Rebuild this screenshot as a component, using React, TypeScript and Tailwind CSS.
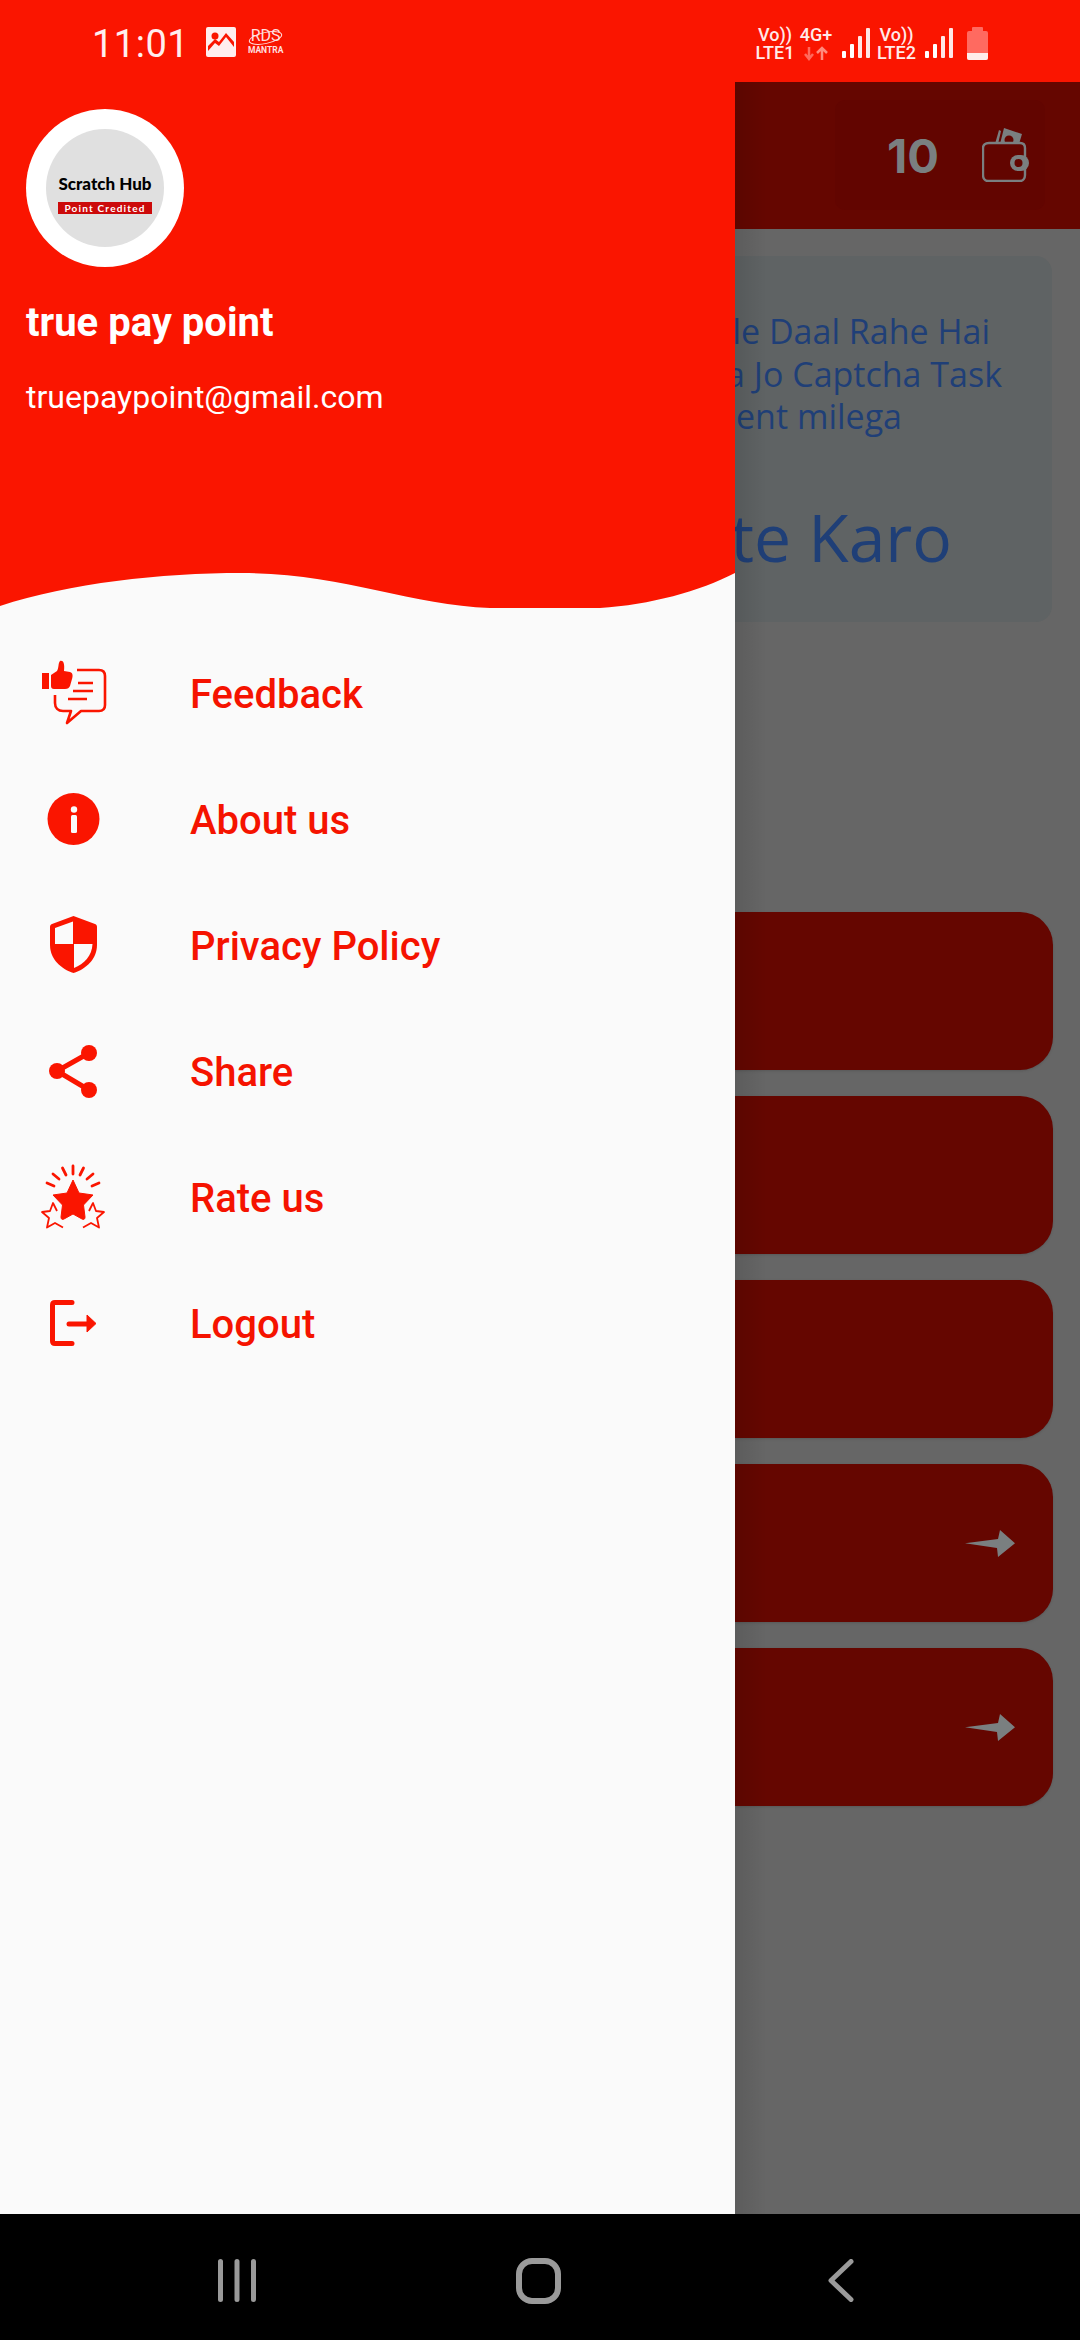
const red = "#fa1500";

function StatusLeft() {
  return (
    <div className="flex items-center pl-[92px] pt-[6px]">
      <span className="text-[38px] leading-none text-[#ffeeee] font-normal tracking-[0.5px]">11:01</span>
      <svg width="30" height="30" viewBox="0 0 30 30" className="ml-[17px] -mt-[5px]">
        <rect width="30" height="30" rx="2" fill="#ffeeee" />
        <circle cx="9" cy="9" r="3.5" fill={red} />
        <path d="M2 24 L9 16 L13 19 L20 10 L28 20 V15 L20 6 L13 15 L9 12 L2 19 Z" fill={red} />
      </svg>
      <div className="relative ml-[12px] -mt-[6px] flex h-[26px] w-[35px] flex-col items-center text-[#ffdfdf]">
        <svg width="35" height="20" viewBox="0 0 35 20" className="absolute left-0 top-0">
          <ellipse cx="17.500" cy="10" rx="16.500" ry="5.500" fill="none" stroke="#ffdfdf" strokeWidth="1" transform="rotate(-12 17.500 10)" />
        </svg>
        <span className="text-[16px] leading-[16px] font-normal">RDS</span>
        <span className="mt-[2px] text-[8.500px] leading-[8px] font-bold">MANTRA</span>
      </div>
    </div>
  );
}

function Signal() {
  return (
    <svg width="28" height="31" viewBox="0 0 28 31">
      <rect x="0" y="23" width="4" height="7" rx="1" fill="#fff" />
      <rect x="8" y="16" width="4" height="14" rx="1" fill="#fff" />
      <rect x="16" y="8" width="4" height="22" rx="1" fill="#ffe6e6" />
      <rect x="24" y="0" width="4" height="30" rx="1" fill="#ffe6e6" />
    </svg>
  );
}

function StatusRight() {
  return (
    <div className="flex items-center pr-[92px] pt-[5px] text-[#ffeaea] font-medium">
      <div className="flex w-[42px] flex-col items-center text-[18px] leading-[18px]">
        <span>Vo))</span>
        <span>LTE1</span>
      </div>
      <div className="ml-[3px] flex w-[34px] flex-col items-center">
        <span className="text-[18px] leading-[18px]">4G+</span>
        <svg width="24" height="15" viewBox="0 0 24 15" className="mt-[2px]">
          <path d="M5 1 V13 M1 8 L5 13 L9 8" stroke="#ff6a5c" strokeWidth="2.500" fill="none" />
          <path d="M18 14 V2 M13 7 L18 2 L23 7" stroke="#ff8a7c" strokeWidth="2.500" fill="none" />
        </svg>
      </div>
      <div className="ml-[9px]"><Signal /></div>
      <div className="ml-[6px] flex w-[41px] flex-col items-center text-[18px] leading-[18px]">
        <span>Vo))</span>
        <span>LTE2</span>
      </div>
      <div className="ml-[8px]"><Signal /></div>
      <svg width="21" height="33" viewBox="0 0 21 33" className="ml-[14px]">
        <rect x="5" y="0" width="11" height="5" rx="1" fill="#ff6a60" />
        <rect x="0" y="4" width="21" height="29" rx="2" fill="#ff6a60" />
        <path d="M0 26 H21 V31 A2 2 0 0 1 19 33 H2 A2 2 0 0 1 0 31 Z" fill="#ffecea" />
      </svg>
    </div>
  );
}

function FeedbackIcon() {
  return (
    <svg width="72" height="72" viewBox="0 0 72 72">
      <rect x="5" y="14" width="7" height="16" fill={red} />
      <path d="M14 16 L20 12 C22 9 21 4 23 2 C26 1 28 4 27 12 L33 13 C36 14 36 17 35 20 L33 27 C32 29 31 30 28 30 L17 30 C15 30 14 29 14 27 Z" fill={red} />
      <path d="M40 11 H62 C66 11 68 13 68 17 V46 C68 50 66 52 62 52 H44 L30 64 L34 52 H26 C21 52 18 49 18 44 V36" fill="none" stroke={red} strokeWidth="2.600" strokeLinejoin="round" />
      <path d="M41 24 H56 M36 32 H56 M31 40 H50" stroke={red} strokeWidth="2.600" />
    </svg>
  );
}

function InfoIcon() {
  return (
    <svg width="72" height="72" viewBox="0 0 72 72">
      <circle cx="36.500" cy="34" r="26" fill={red} />
      <circle cx="37" cy="24.500" r="3.200" fill="#fafafa" />
      <rect x="34" y="30" width="6" height="18" rx="1.500" fill="#fafafa" />
    </svg>
  );
}

function ShieldIcon() {
  return (
    <svg width="72" height="72" viewBox="0 0 72 72">
      <path d="M36.500 5 L58 13 C59.500 13.600 60 14.500 60 16 V34 C60 48 49 58 36.500 62 C24 58 13 48 13 34 V16 C13 14.500 13.500 13.600 15 13 Z" fill={red} />
      <path d="M36 10.500 L18 17 V33 H36 Z" fill="#fafafa" />
      <path d="M37 33 H55.500 C55 45 47 53 37 57 Z" fill="#fafafa" />
    </svg>
  );
}

function ShareIcon() {
  return (
    <svg width="72" height="72" viewBox="0 0 72 72">
      <path d="M52 16 L20 34 L52 53" fill="none" stroke={red} strokeWidth="5" />
      <circle cx="52" cy="16" r="8" fill={red} />
      <circle cx="20" cy="34" r="8" fill={red} />
      <circle cx="52" cy="53" r="8" fill={red} />
    </svg>
  );
}

function RateIcon() {
  return (
    <svg width="72" height="72" viewBox="0 0 72 72">
      <path d="M36 3 V11 M25.500 5 L29 12 M16 11 L22 16 M10 20 L17 23 M46.500 5 L43 12 M56 11 L50 16 M62 20 L55 23" stroke={red} strokeWidth="2.800" strokeLinecap="round" />
      <path d="M26 64.500 L18 60 L10 64.500 L12 55 L5 49 L13 48 L16 40 L20 48" fill="none" stroke={red} strokeWidth="1.800" strokeLinejoin="round" />
      <path d="M46 64.500 L54 60 L62 64.500 L60 55 L67 49 L59 48 L56 40 L52 48" fill="none" stroke={red} strokeWidth="1.800" strokeLinejoin="round" />
      <path d="M36 17 L42 30 L56 32 L46.500 42 L48 54 C48 56 47 57 45 56 L36 51 L27 56 C25 57 24 56 24 54 L25.500 42 L16 32 L30 30 Z" fill={red} stroke={red} strokeWidth="1" strokeLinejoin="round" />
    </svg>
  );
}

function LogoutIcon() {
  return (
    <svg width="72" height="72" viewBox="0 0 72 72">
      <path d="M35 13.500 H18 C16 13.500 15.500 14 15.500 16 V52 C15.500 54 16 54.500 18 54.500 H35" fill="none" stroke={red} strokeWidth="5" strokeLinecap="round" />
      <path d="M32 35 H52" stroke={red} strokeWidth="5" strokeLinecap="round" />
      <path d="M50 26 L59 34.500 L50 43 Z" fill={red} stroke={red} strokeWidth="1" strokeLinejoin="round" />
    </svg>
  );
}

const menu = [
  { label: "Feedback", icon: <FeedbackIcon /> },
  { label: "About us", icon: <InfoIcon /> },
  { label: "Privacy Policy", icon: <ShieldIcon /> },
  { label: "Share", icon: <ShareIcon /> },
  { label: "Rate us", icon: <RateIcon /> },
  { label: "Logout", icon: <LogoutIcon /> },
];

function Drawer() {
  return (
    <div className="flex h-full w-[735px] shrink-0 flex-col bg-[#fafafa]">
      <div className="h-[491px] bg-[#fa1500] pl-[26px] pt-[27px]">
        <div className="flex h-[158px] w-[158px] items-center justify-center rounded-full bg-white">
          <div className="flex h-[118px] w-[118px] flex-col items-center rounded-full bg-[#e0e0e0] pt-[45px]">
            <span className="text-[17px] leading-[20px] font-black text-black font-['Lato',sans-serif]">Scratch Hub</span>
            <span className="mt-[8px] w-[94px] bg-[#cc0a0a] text-center text-[10px] leading-[12px] font-bold tracking-[1.200px] text-white font-['Lato',sans-serif]">Point Credited</span>
          </div>
        </div>
        <div className="mt-[33px] text-[40px] leading-[46px] font-bold text-white">true pay point</div>
        <div className="mt-[33px] text-[32px] leading-[36px] text-white">truepaypoint@gmail.com</div>
      </div>
      <svg width="735" height="36" viewBox="0 0 735 36" className="block shrink-0">
        <path d="M0 0 V33 C70 10 160 0 242 0 C340 0 410 32 490 35 L600 35 C650 32 700 18 735 0 Z" fill={red} />
      </svg>
      <div className="mt-[23px] flex flex-col">
        {menu.map((item) => (
          <div key={item.label} className="flex h-[126px] items-center pl-[37px]">
            {item.icon}
            <span className="ml-[81px] text-[40px] font-medium text-[#f51300]">{item.label}</span>
          </div>
        ))}
      </div>
    </div>
  );
}

function WalletIcon() {
  return (
    <svg width="48" height="54" viewBox="0 0 48 54">
      <path d="M13 16 L17 2 L19 3 L16 16 Z" fill="#7a7f80" />
      <path d="M18 16 L22 0 L40 6 L37 16 Z" fill="#7a7f80" />
      <circle cx="27" cy="12" r="4.500" fill="#620500" />
      <path d="M7 15 H38 C41 15 43 17 43 20 V47 C43 50.500 41 53 38 53 H6 C3 53 1 50.500 1 47 V20 C1 17 3 15 7 15 Z" fill="#620500" stroke="#7a7f80" strokeWidth="2.400" />
      <rect x="28" y="27" width="19" height="16" rx="8" fill="#7a7f80" />
      <circle cx="36.500" cy="35" r="4" fill="#620500" />
    </svg>
  );
}

function Arrow() {
  return (
    <svg width="50" height="27" viewBox="0 0 50 27">
      <path d="M0 13.300 L33 9 L35 0 L50 13.300 L33 27 L32 18 Z" fill="#7a7f80" />
    </svg>
  );
}

function ActionRow({ arrow }: { arrow?: boolean }) {
  return (
    <div className="flex h-[158px] items-center justify-end rounded-r-[33px] bg-[#650600] pr-[38px] shadow-sm">
      {arrow && <Arrow />}
    </div>
  );
}

function Backdrop() {
  return (
    <div className="relative flex h-full flex-1 flex-col overflow-hidden bg-[#666666]">
      <div className="flex h-[147px] shrink-0 items-start justify-end bg-[#650600] pr-[35px] pt-[18px]">
        <div className="flex h-[110px] w-[210px] items-center rounded-[10px] bg-[#620500] pl-[52px]">
          <span className="text-[47px] leading-none font-bold text-[#7a7f80] font-['Inter',sans-serif]">10</span>
          <div className="ml-[43px]"><WalletIcon /></div>
        </div>
      </div>
      <div className="mt-[27px] mr-[28px] flex h-[366px] shrink-0 flex-col items-end overflow-hidden rounded-r-[16px] bg-[#5f6364] pt-[54px] text-[#1f3f77] font-['Open_Sans',sans-serif]">
        <div className="mr-[62px] whitespace-nowrap text-[34px] leading-[42.500px]">le Daal Rahe Hai</div>
        <div className="mr-[50px] whitespace-nowrap text-[34px] leading-[42.500px]">a Jo Captcha Task</div>
        <div className="mr-[150px] whitespace-nowrap text-[34px] leading-[42.500px]">ent milega</div>
        <div className="mt-[60px] mr-[100px] whitespace-nowrap text-[66px] leading-[76px]">te Karo</div>
      </div>
      <div className="mt-[290px] mr-[27px] flex flex-col gap-[26px]">
        <ActionRow />
        <ActionRow />
        <ActionRow />
        <ActionRow arrow />
        <ActionRow arrow />
      </div>
      <div className="absolute inset-y-0 left-0 w-[32px] bg-gradient-to-r from-black/10 to-transparent" />
    </div>
  );
}

function NavBar() {
  return (
    <div className="flex h-[126px] shrink-0 items-center bg-black pl-[218px] pt-[7px]">
      <svg width="38" height="43" viewBox="0 0 38 43">
        <path d="M2.500 2.500 V40.500 M19 2.500 V40.500 M35.500 2.500 V40.500" stroke="#9a9a9a" strokeWidth="5" strokeLinecap="round" />
      </svg>
      <svg width="45" height="46" viewBox="0 0 45 46" className="ml-[260px]">
        <rect x="3" y="3" width="39" height="40" rx="13" fill="none" stroke="#9a9a9a" strokeWidth="6" />
      </svg>
      <svg width="26" height="43" viewBox="0 0 26 43" className="ml-[267px]">
        <path d="M23 2.500 L3 21.500 L23 40.500" fill="none" stroke="#9a9a9a" strokeWidth="5" strokeLinecap="round" strokeLinejoin="round" />
      </svg>
    </div>
  );
}

export default function App() {
  return (
    <div className="flex h-[2340px] w-[1080px] flex-col overflow-hidden font-['Roboto',sans-serif]">
      <div className="flex h-[82px] shrink-0 items-center justify-between bg-[#fa1500]">
        <StatusLeft />
        <StatusRight />
      </div>
      <div className="flex min-h-0 flex-1">
        <Drawer />
        <Backdrop />
      </div>
      <NavBar />
    </div>
  );
}
